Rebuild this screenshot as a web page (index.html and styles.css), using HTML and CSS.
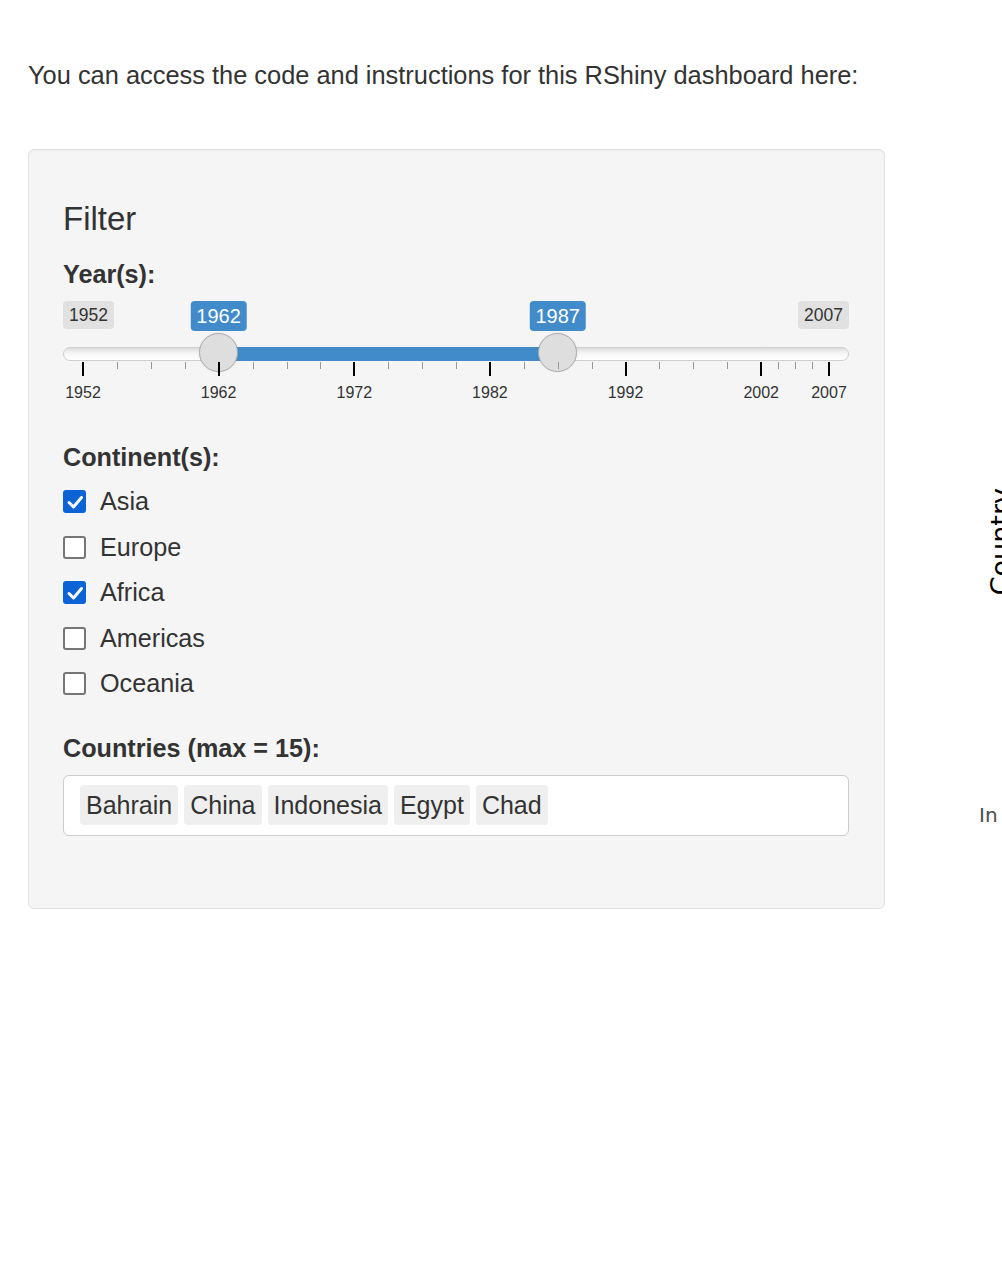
FILE: index.html
```html
<!DOCTYPE html>
<html lang="en">
<head>
<meta charset="utf-8">
<title>RShiny dashboard</title>
<link rel="stylesheet" href="styles.css">
</head>
<body>
<div class="page">
  <div class="sidebar">
    <p class="intro">You can access the code and instructions for this RShiny dashboard here:</p>
    <div class="well">
      <h4 class="title">Filter</h4>

      <div class="label label-year">Year(s):</div>
      <div class="slider">
        <span class="sl-minmax sl-min">1952</span>
        <span class="sl-minmax sl-max">2007</span>
        <span class="sl-val" style="left:155.6px">1962</span>
        <span class="sl-val" style="left:494.7px">1987</span>
        <div class="sl-track"></div>
        <div class="sl-bar" style="left:155.6px;width:339.1px"></div>
        <span class="sl-thumb" style="left:155.6px"></span>
        <span class="sl-thumb" style="left:494.7px"></span>

        <span class="tick major" style="left:20px"></span>
        <span class="tick" style="left:53.9px"></span>
        <span class="tick" style="left:87.8px"></span>
        <span class="tick" style="left:121.7px"></span>
        <span class="tick major" style="left:155.6px"></span>
        <span class="tick" style="left:189.5px"></span>
        <span class="tick" style="left:223.5px"></span>
        <span class="tick" style="left:257.4px"></span>
        <span class="tick major" style="left:291.3px"></span>
        <span class="tick" style="left:325.2px"></span>
        <span class="tick" style="left:359.1px"></span>
        <span class="tick" style="left:393.0px"></span>
        <span class="tick major" style="left:426.9px"></span>
        <span class="tick" style="left:460.8px"></span>
        <span class="tick" style="left:494.7px"></span>
        <span class="tick" style="left:528.6px"></span>
        <span class="tick major" style="left:562.5px"></span>
        <span class="tick" style="left:596.4px"></span>
        <span class="tick" style="left:630.4px"></span>
        <span class="tick" style="left:664.3px"></span>
        <span class="tick major" style="left:698.2px"></span>
        <span class="tick" style="left:715.1px"></span>
        <span class="tick" style="left:732.1px"></span>
        <span class="tick" style="left:749.0px"></span>
        <span class="tick major" style="left:766.0px"></span>

        <span class="grid-label" style="left:20px">1952</span>
        <span class="grid-label" style="left:155.6px">1962</span>
        <span class="grid-label" style="left:291.3px">1972</span>
        <span class="grid-label" style="left:426.9px">1982</span>
        <span class="grid-label" style="left:562.5px">1992</span>
        <span class="grid-label" style="left:698.2px">2002</span>
        <span class="grid-label" style="left:766.0px">2007</span>
      </div>

      <div class="label label-continent">Continent(s):</div>
      <div class="checks">
        <div class="check"><span class="box checked"><svg viewBox="0 0 22 22" width="22" height="22"><polyline points="5,11.5 9.5,16 17.5,6.5" fill="none" stroke="#fff" stroke-width="3" stroke-linecap="round" stroke-linejoin="round"/></svg></span><span>Asia</span></div>
        <div class="check"><span class="box"></span><span>Europe</span></div>
        <div class="check"><span class="box checked"><svg viewBox="0 0 22 22" width="22" height="22"><polyline points="5,11.5 9.5,16 17.5,6.5" fill="none" stroke="#fff" stroke-width="3" stroke-linecap="round" stroke-linejoin="round"/></svg></span><span>Africa</span></div>
        <div class="check"><span class="box"></span><span>Americas</span></div>
        <div class="check"><span class="box"></span><span>Oceania</span></div>
      </div>

      <div class="label label-countries">Countries (max = 15):</div>
      <div class="select">
        <span class="tag">Bahrain</span>
        <span class="tag">China</span>
        <span class="tag">Indonesia</span>
        <span class="tag">Egypt</span>
        <span class="tag">Chad</span>
      </div>
    </div>
  </div>
  <div class="main">
    <div class="plot">
      <span class="axis-title">Country</span>
      <span class="axis-tick">In</span>
    </div>
  </div>
</div>
</body>
</html>
```
FILE: styles.css
```css
html, body {
  margin: 0;
  padding: 0;
  overflow: hidden;
  background: #fff;
}
body {
  font-family: "Liberation Sans", Arial, sans-serif;
  color: #333;
}
.page {
  display: flex;
  gap: 15px;
  padding-left: 28px;
}
.sidebar {
  flex: none;
  width: 857px;
}
.intro {
  margin: 60px 0 0;
  font-size: 25.4px;
  line-height: 30px;
  white-space: nowrap;
}
.well {
  margin-top: 59px;
  background: #f5f5f5;
  border: 1px solid #e3e3e3;
  border-radius: 6px;
  box-shadow: inset 0 1px 1px rgba(0,0,0,0.05);
  padding: 0 35px 72px 34px;
}
.title {
  margin: 51px 0 0;
  font-size: 33px;
  line-height: 36px;
  font-weight: normal;
}
.label {
  font-weight: bold;
  font-size: 25.2px;
  line-height: 30px;
}
.label-year { margin-top: 22px; }
.label-continent { margin-top: 36px; }
.label-countries { margin-top: 26px; }

.slider {
  position: relative;
  height: 105px;
  margin-top: 12px;
}
.sl-minmax {
  position: absolute;
  top: 0;
  height: 28px;
  line-height: 28px;
  padding: 0 6px;
  font-size: 17.5px;
  background: #e1e1e1;
  border-radius: 4px;
  color: #333;
}
.sl-min { left: 0; }
.sl-max { right: 0; }
.sl-val {
  position: absolute;
  top: 0;
  height: 30px;
  line-height: 30px;
  padding: 0 6px;
  font-size: 20px;
  color: #fff;
  background: #428bca;
  border-radius: 4px;
  transform: translateX(-50%);
}
.sl-track {
  position: absolute;
  left: 0;
  right: 0;
  top: 46px;
  height: 14px;
  box-sizing: border-box;
  border: 1px solid #cfcfcf;
  border-radius: 7px;
  background: linear-gradient(to bottom, #dcdcdc, #f6f6f6 45%, #fff);
}
.sl-bar {
  position: absolute;
  top: 46px;
  height: 14px;
  background: #428bca;
}
.sl-thumb {
  position: absolute;
  top: 32px;
  width: 39px;
  height: 39px;
  margin-left: -19.5px;
  box-sizing: border-box;
  border-radius: 50%;
  border: 1px solid #acacac;
  background: #dedede;
  box-shadow: 0 0 2px rgba(0,0,0,0.1);
}
.tick {
  position: absolute;
  top: 61px;
  width: 1px;
  height: 7px;
  background: #999;
}
.tick.major {
  width: 2px;
  height: 14px;
  margin-left: -1px;
  background: #000;
}
.grid-label {
  position: absolute;
  top: 82px;
  font-size: 16px;
  line-height: 20px;
  color: #333;
  transform: translateX(-50%);
}

.checks {
  margin-top: 7px;
}
.check {
  display: flex;
  align-items: center;
  gap: 14px;
  height: 45.5px;
  font-size: 25.2px;
}
.box {
  flex: none;
  width: 23px;
  height: 23px;
  box-sizing: border-box;
  border: 2px solid #767676;
  border-radius: 3px;
  background: #fff;
  display: flex;
}
.box.checked {
  border: none;
  background: #0b63d6;
  align-items: center;
  justify-content: center;
}

.select {
  margin-top: 12px;
  height: 61px;
  box-sizing: border-box;
  border: 1px solid #ccc;
  border-radius: 6px;
  background: #fff;
  padding: 9px 16px;
  display: flex;
  gap: 6px;
}
.tag {
  height: 40px;
  line-height: 40px;
  padding: 0 6px;
  font-size: 25px;
  background: #efefef;
  border-radius: 4px;
  color: #333;
}

.main {
  flex: none;
  width: 400px;
}
.plot {
  position: relative;
  height: 1000px;
}
.axis-title {
  position: absolute;
  left: 87px;
  top: 488px;
  font-family: "DejaVu Sans", sans-serif;
  font-size: 27px;
  line-height: 27px;
  color: #000;
  writing-mode: vertical-rl;
  transform: rotate(180deg);
}
.axis-tick {
  position: absolute;
  left: 79px;
  top: 803px;
  font-family: "DejaVu Sans", sans-serif;
  font-size: 20px;
  line-height: 24px;
  color: #4d4d4d;
}
```
